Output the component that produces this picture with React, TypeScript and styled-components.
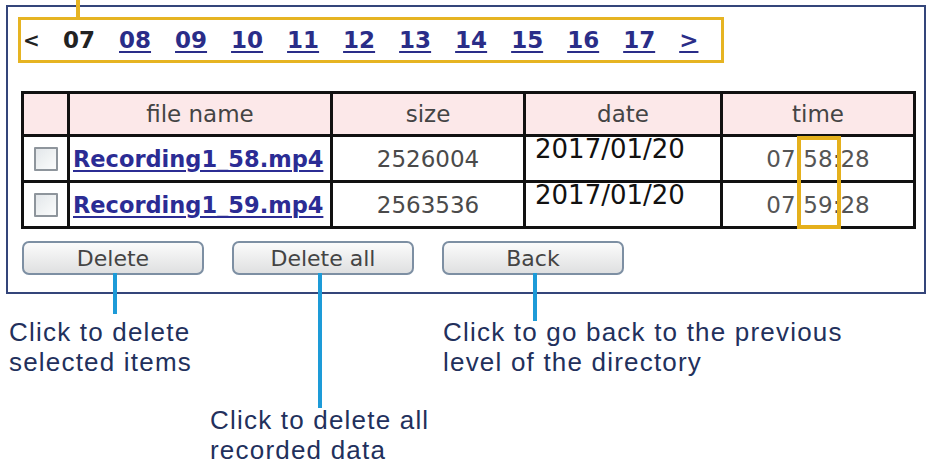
import React from "react";
import styled, { createGlobalStyle } from "styled-components";

const GlobalStyle = createGlobalStyle`
  html, body {
    margin: 0;
    background: #ffffff;
  }
  body {
    font-family: "DejaVu Sans", Verdana, sans-serif;
  }
`;

const days = ["08", "09", "10", "11", "12", "13", "14", "15", "16", "17"];

const files = [
  { name: "Recording1_58.mp4", size: "2526004", date: "2017/01/20", time: "07:58:28" },
  { name: "Recording1_59.mp4", size: "2563536", date: "2017/01/20", time: "07:59:28" },
];

const actions = [
  { label: "Delete", lead: 41, shift: 2 },
  { label: "Delete all", lead: 135, shift: -3 },
  { label: "Back", lead: 48, shift: 2 },
];

const App: React.FC = () => {
  return (
    <Page>
      <GlobalStyle />
      <Panel>
        <DayNav>
          <Arrow>&lt;</Arrow>
          <Current>07</Current>
          {days.map((d) => (
            <DayLink key={d} href="#">
              {d}
            </DayLink>
          ))}
          <DayLink href="#">&gt;</DayLink>
        </DayNav>

        <TableWrap>
          <FileTable>
            <colgroup>
              <col style={{ width: 46 }} />
              <col style={{ width: 263 }} />
              <col style={{ width: 193 }} />
              <col style={{ width: 197 }} />
              <col style={{ width: 193 }} />
            </colgroup>
            <thead>
              <tr>
                <Th />
                <Th>file name</Th>
                <Th>size</Th>
                <Th>date</Th>
                <Th>time</Th>
              </tr>
            </thead>
            <tbody>
              {files.map((f) => (
                <Row key={f.name}>
                  <CheckCell>
                    <Check type="checkbox" />
                  </CheckCell>
                  <NameCell>
                    <FileLink href="#">{f.name}</FileLink>
                  </NameCell>
                  <SizeCell>{f.size}</SizeCell>
                  <DateCell>{f.date}</DateCell>
                  <TimeCell>{f.time}</TimeCell>
                </Row>
              ))}
            </tbody>
          </FileTable>
          <Highlight />
        </TableWrap>

        <ButtonRow>
          {actions.map((a) => (
            <Button key={a.label} $lead={a.lead} $shift={a.shift}>
              {a.label}
            </Button>
          ))}
        </ButtonRow>
      </Panel>

      <CalloutRow $indent={9}>
        <Callout $width={434}>
          Click to delete
          <br />
          selected items
        </Callout>
        <Callout>
          Click to go back to the previous
          <br />
          level of the directory
        </Callout>
      </CalloutRow>
      <CalloutRow $indent={210} $top={28}>
        <Callout>
          Click to delete all
          <br />
          recorded data
        </Callout>
      </CalloutRow>
    </Page>
  );
};

export default App;

const Page = styled.div`
  width: 932px;
  height: 467px;
  box-sizing: border-box;
  padding: 5px 0 0 6px;
  overflow: hidden;
`;

const Panel = styled.div`
  width: 920px;
  height: 289px;
  box-sizing: border-box;
  border: 2px solid #34457a;
  padding: 10px 0 0 10px;
`;

const DayNav = styled.nav`
  position: relative;
  display: flex;
  align-items: center;
  gap: 24px;
  width: 706px;
  height: 46px;
  box-sizing: border-box;
  border: 3px solid #e6b422;
  padding-left: 2px;
  font-size: 23px;
  font-weight: bold;

  &::before {
    content: "";
    position: absolute;
    left: 55px;
    top: -20px;
    width: 4px;
    height: 20px;
    background: #e6b422;
  }
`;

const Arrow = styled.span`
  width: 16px;
  font-size: 20px;
  color: #222;
`;

const Current = styled.span`
  color: #222;
`;

const DayLink = styled.a`
  color: #2a2d88;
  text-decoration: underline;
  text-decoration-thickness: 2px;
  text-underline-offset: 3px;
`;

const TableWrap = styled.div`
  position: relative;
  margin: 28px 0 0 3px;
  width: 893px;
`;

const FileTable = styled.table`
  width: 893px;
  table-layout: fixed;
  border-collapse: collapse;
  border: 3px solid #111;
`;

const Th = styled.th`
  height: 40px;
  padding: 0;
  border: 3px solid #111;
  background: #fce8e9;
  color: #444;
  font-size: 23px;
  font-weight: normal;
  text-align: center;
`;

const Row = styled.tr`
  height: 46px;
`;

const Cell = styled.td`
  padding: 0;
  border: 3px solid #111;
  background: #fff;
  font-size: 23px;
  color: #4a4a4a;
`;

const CheckCell = styled(Cell)`
  text-align: center;
`;

const Check = styled.input`
  appearance: none;
  display: block;
  margin: 0 auto;
  width: 24px;
  height: 24px;
  box-sizing: border-box;
  border: 2px solid #8e959c;
  border-radius: 1px;
  background: linear-gradient(135deg, #e3e7ea, #fbfcfc);
`;

const NameCell = styled(Cell)`
  padding-left: 3px;
  white-space: nowrap;
`;

const FileLink = styled.a`
  color: #2b2c94;
  font-size: 22.5px;
  font-weight: bold;
  text-decoration: underline;
  text-decoration-thickness: 2px;
  text-underline-offset: 3px;
`;

const SizeCell = styled(Cell)`
  text-align: center;
`;

const DateCell = styled(Cell)`
  vertical-align: top;
  padding: 0 0 0 9px;
  font-size: 26px;
  line-height: 24px;
  color: #111;
`;

const TimeCell = styled(Cell)`
  text-align: center;
  color: #555;
`;

const Highlight = styled.div`
  position: absolute;
  left: 776px;
  top: 45px;
  width: 44px;
  height: 93px;
  box-sizing: border-box;
  border: 4px solid #e5b01c;
`;

const ButtonRow = styled.div`
  display: flex;
  gap: 28px;
  margin: 12px 0 0 4px;
`;

const Button = styled.button<{ $lead: number; $shift: number }>`
  position: relative;
  width: 182px;
  height: 34px;
  padding: 0;
  border: 2px solid #7d8fa3;
  border-radius: 7px;
  background: linear-gradient(#fbfbfb, #dfe0e1);
  font: inherit;
  font-size: 22px;
  color: #444;

  &::after {
    content: "";
    position: absolute;
    top: 100%;
    left: calc(50% + ${(p) => p.$shift}px - 2px);
    width: 4px;
    height: ${(p) => p.$lead}px;
    background: #1d9bd8;
  }
`;

const CalloutRow = styled.div<{ $indent: number; $top?: number }>`
  display: flex;
  padding-left: ${(p) => p.$indent - 6}px;
  margin-top: ${(p) => p.$top ?? 23}px;
`;

const Callout = styled.p<{ $width?: number }>`
  margin: 0;
  width: ${(p) => (p.$width ? `${p.$width}px` : "auto")};
  font-family: "Liberation Sans", Arial, sans-serif;
  font-size: 26px;
  line-height: 30px;
  letter-spacing: 1.2px;
  color: #22305c;
`;
